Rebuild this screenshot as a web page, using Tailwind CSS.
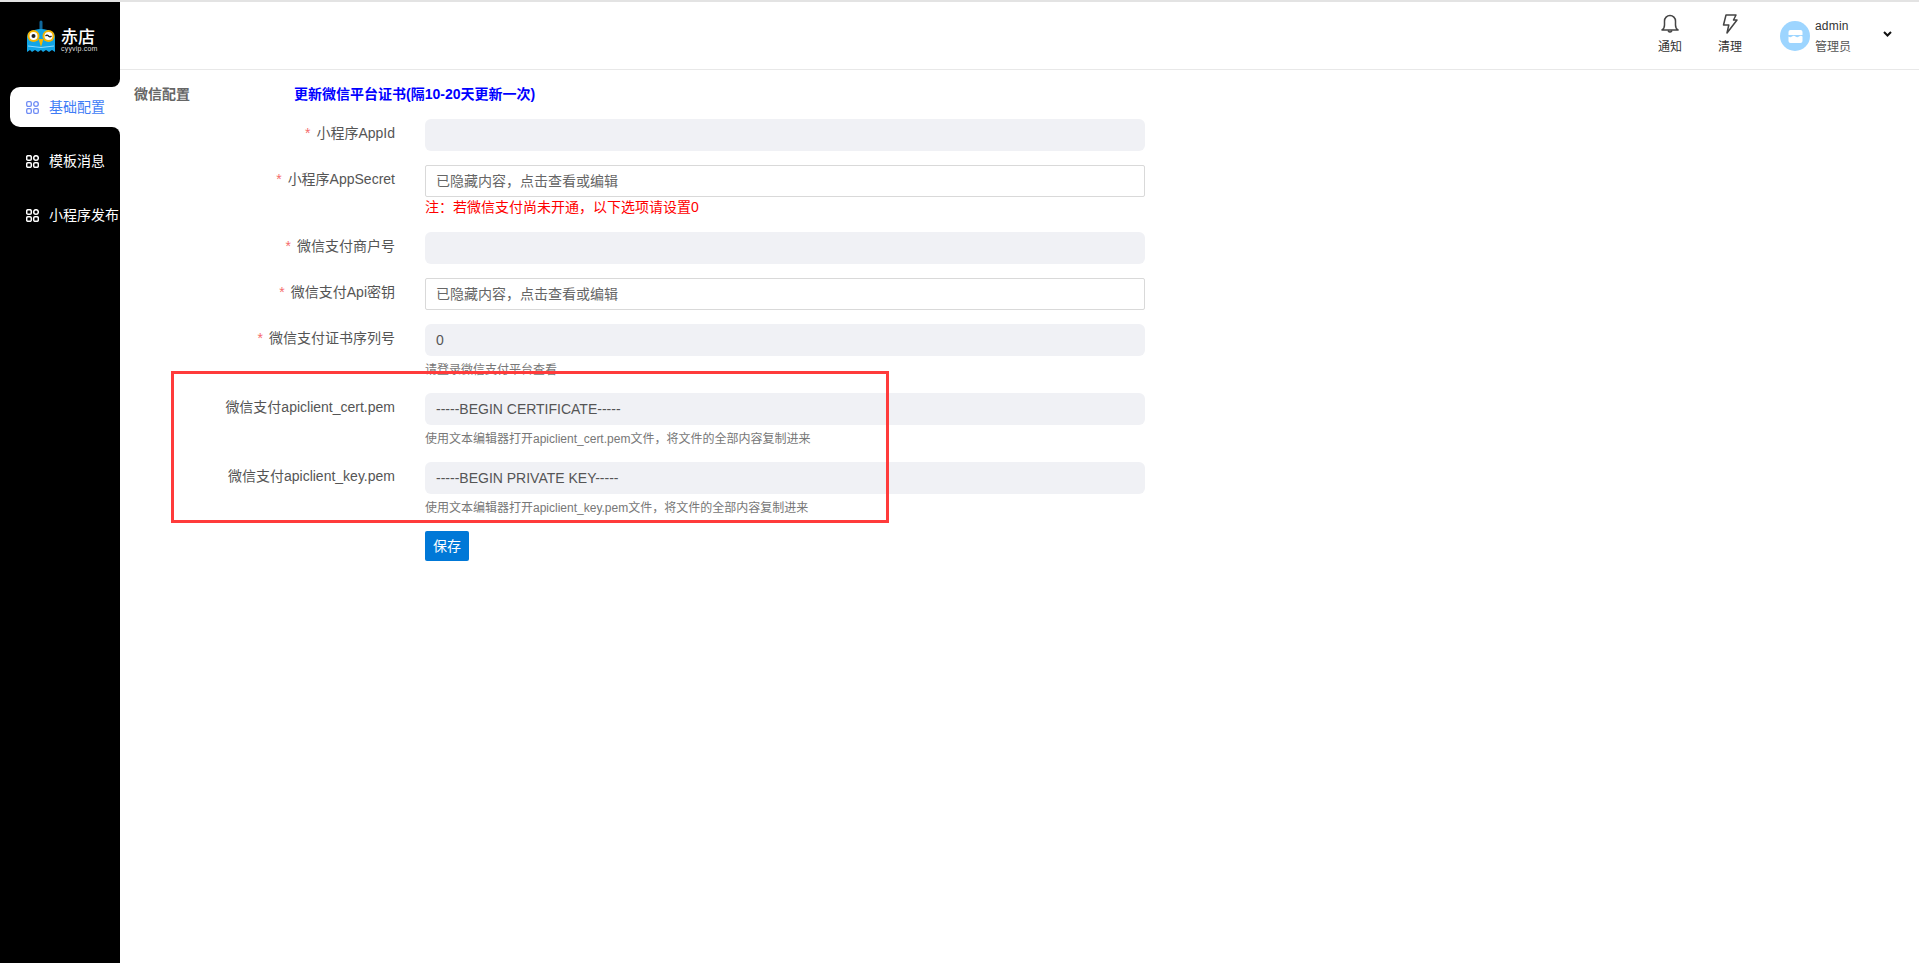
<!DOCTYPE html>
<html lang="zh">
<head>
  <meta charset="UTF-8" />
  <title>微信配置</title>
  <script src="https://cdn.jsdelivr.net/npm/@tailwindcss/browser@4"></script>
</head>
<body class="bg-white h-[963px] overflow-hidden font-['Liberation_Sans','Noto_Sans_CJK_SC',sans-serif] text-[14px] text-[#555]">
  <div class="h-[2px] bg-[#e3e3e3]"></div>
  <div class="flex h-[961px] relative">

    <!-- sidebar -->
    <aside class="w-[120px] shrink-0 bg-black text-white">
      <div class="h-[68px] pt-[18px] pl-[26px] flex gap-[5px]">
        <svg width="30" height="33" viewBox="0 0 30 33">
          <path d="M15 2v8" stroke="#10689c" stroke-width="3" stroke-linecap="round"/>
          <path d="M2 13q13-8 26 0l1 4v15l-3-2-3 2-3-2-3 2-2-2-3 2-3-2-3 2-2-2-3 2V17z" fill="#12a5e6"/>
          <path d="M2 26q13 3 26 0" stroke="#8fdcff" stroke-width="1" fill="none"/>
          <circle cx="7.500" cy="16" r="6" fill="#f7b500"/>
          <circle cx="7.500" cy="16" r="4" fill="#fff"/>
          <circle cx="7.500" cy="16" r="2" fill="#222"/>
          <circle cx="22.500" cy="16" r="6" fill="#f7b500"/>
          <circle cx="22.500" cy="16" r="4" fill="#fff"/>
          <path d="M19.500 16q1.500-1.800 3 0t3 0" stroke="#222" stroke-width="1.200" fill="none"/>
          <path d="M12.500 19h5l-2.500 8z" fill="#f7b500"/>
        </svg>
        <div class="pt-[9px] leading-none">
          <div class="text-[17px] h-[17px] leading-[17px] font-medium">赤店</div>
          <div class="text-[7px] leading-[8px] -mt-[1px] text-[#ddd] tracking-[0.2px]">cyyvip.com</div>
        </div>
      </div>
      <nav class="pt-[17px] flex flex-col gap-[14px]">
        <a class="relative ml-[10px] h-[40px] bg-white rounded-l-[10px] flex items-center pl-[16px] gap-[10px] text-[#3f7df6]">
          <span class="absolute right-0 -top-[10px] w-[10px] h-[10px] bg-white"><span class="block w-full h-full bg-black rounded-br-[8px]"></span></span>
          <span class="absolute right-0 -bottom-[10px] w-[10px] h-[10px] bg-white"><span class="block w-full h-full bg-black rounded-tr-[8px]"></span></span>
          <svg width="13" height="13" viewBox="0 0 13 13" fill="none" stroke="#6f8cf5" stroke-width="1.300"><rect x=".7" y=".7" width="4.600" height="4.600" rx="1.300"/><circle cx="10" cy="3" r="2.300"/><rect x=".7" y="7.700" width="4.600" height="4.600" rx="1.300"/><rect x="7.700" y="7.700" width="4.600" height="4.600" rx="1.300"/></svg>
          <span>基础配置</span>
        </a>
        <a class="ml-[10px] h-[40px] flex items-center pl-[16px] gap-[10px] whitespace-nowrap">
          <svg width="13" height="13" viewBox="0 0 13 13" fill="none" stroke="#fff" stroke-width="1.500"><rect x=".7" y=".7" width="4.600" height="4.600" rx="1.300"/><circle cx="10" cy="3" r="2.300"/><rect x=".7" y="7.700" width="4.600" height="4.600" rx="1.300"/><rect x="7.700" y="7.700" width="4.600" height="4.600" rx="1.300"/></svg>
          <span>模板消息</span>
        </a>
        <a class="ml-[10px] h-[40px] flex items-center pl-[16px] gap-[10px] whitespace-nowrap">
          <svg width="13" height="13" viewBox="0 0 13 13" fill="none" stroke="#fff" stroke-width="1.500"><rect x=".7" y=".7" width="4.600" height="4.600" rx="1.300"/><circle cx="10" cy="3" r="2.300"/><rect x=".7" y="7.700" width="4.600" height="4.600" rx="1.300"/><rect x="7.700" y="7.700" width="4.600" height="4.600" rx="1.300"/></svg>
          <span>小程序发布</span>
        </a>
      </nav>
    </aside>

    <div class="flex-1 min-w-0">
      <!-- header -->
      <header class="h-[67px] border-b border-[#e8e8e8] box-content flex justify-end text-[12px] text-[#333]">
        <div class="w-[24px] mr-[36px] pt-[12px] flex flex-col items-center">
          <svg width="18" height="20" viewBox="0 0 18 20" fill="none" stroke="#444" stroke-width="1.500" stroke-linejoin="round"><path d="M1 16q2.500-1.500 2.500-5V7a5.500 5.500 0 0 1 11 0v4q0 3.500 2.500 5z"/><path d="M7 16.500q2 3 4 0"/></svg>
          <span class="mt-[4px] leading-[18px]">通知</span>
        </div>
        <div class="w-[24px] mr-[38px] pt-[12px] flex flex-col items-center">
          <svg width="16" height="20" viewBox="0 0 16 20" fill="none" stroke="#444" stroke-width="1.500" stroke-linejoin="round"><path d="M4 1h10l-2.500 5H15L5 19l1.800-8H1.500z"/></svg>
          <span class="mt-[4px] leading-[18px]">清理</span>
        </div>
        <div class="flex pt-[19px]">
          <div class="w-[30px] h-[30px] rounded-full bg-[#9dd5ff] flex items-center justify-center">
            <svg width="15" height="13" viewBox="0 0 15 13"><path d="M2.500 0h10q2 0 2 2v3H.5V2q0-2 2-2z" fill="#fff"/><path d="M.5 6.500q1.750 1.500 3.500 0t3.500 0 3.500 0 3.500 0V11q0 2-2 2h-10q-2 0-2-2z" fill="#fff"/></svg>
          </div>
          <div class="ml-[5px] w-[68px]">
            <div class="leading-[18px] -mt-[4px] tracking-[0.2px]">admin</div>
            <div class="leading-[18px] mt-[3px] text-[#555]">管理员</div>
          </div>
          <svg class="mt-[10px] mr-[27px]" width="9" height="6" viewBox="0 0 9 6" fill="none" stroke="#111" stroke-width="2"><path d="M1 1l3.500 3.500L8 1"/></svg>
        </div>
      </header>

      <!-- form -->
      <main class="pl-[14px] pt-[14px] relative">
        <div class="flex h-[21px] leading-[21px]">
          <span class="w-[160px] font-bold text-[#666]">微信配置</span>
          <a class="font-bold text-[#0000ff]">更新微信平台证书(隔10-20天更新一次)</a>
        </div>
        <form class="mt-[14px] flex flex-col gap-[14px]">
          <div class="flex">
            <label class="w-[261px] text-right pt-[4px] leading-[21px]"><span class="text-[#f56c6c] mr-[6px]">*</span>小程序AppId</label>
            <div class="ml-[30px] w-[720px]"><div class="h-[32px] bg-[#f0f1f5] rounded-[6px]"></div></div>
          </div>
          <div class="flex">
            <label class="w-[261px] text-right pt-[4px] leading-[21px]"><span class="text-[#f56c6c] mr-[6px]">*</span>小程序AppSecret</label>
            <div class="ml-[30px] w-[720px]">
              <div class="h-[32px] border border-[#d9d9d9] rounded-[2px] px-[10px] leading-[30px] text-[#666]">已隐藏内容，点击查看或编辑</div>
              <p class="leading-[21px] text-[#ff0000]">注：若微信支付尚未开通，以下选项请设置0</p>
            </div>
          </div>
          <div class="flex">
            <label class="w-[261px] text-right pt-[4px] leading-[21px]"><span class="text-[#f56c6c] mr-[6px]">*</span>微信支付商户号</label>
            <div class="ml-[30px] w-[720px]"><div class="h-[32px] bg-[#f0f1f5] rounded-[6px]"></div></div>
          </div>
          <div class="flex">
            <label class="w-[261px] text-right pt-[4px] leading-[21px]"><span class="text-[#f56c6c] mr-[6px]">*</span>微信支付Api密钥</label>
            <div class="ml-[30px] w-[720px]">
              <div class="h-[32px] border border-[#d9d9d9] rounded-[2px] px-[10px] leading-[30px] text-[#666]">已隐藏内容，点击查看或编辑</div>
            </div>
          </div>
          <div class="flex">
            <label class="w-[261px] text-right pt-[4px] leading-[21px]"><span class="text-[#f56c6c] mr-[6px]">*</span>微信支付证书序列号</label>
            <div class="ml-[30px] w-[720px]">
              <div class="h-[32px] bg-[#f0f1f5] rounded-[6px] px-[11px] leading-[32px]">0</div>
              <p class="mt-[5px] text-[12px] leading-[18px] text-[#777]">请登录微信支付平台查看</p>
            </div>
          </div>
          <div class="flex">
            <label class="w-[261px] text-right pt-[4px] leading-[21px]">微信支付apiclient_cert.pem</label>
            <div class="ml-[30px] w-[720px]">
              <div class="h-[32px] bg-[#f0f1f5] rounded-[6px] px-[11px] leading-[32px]">-----BEGIN CERTIFICATE-----</div>
              <p class="mt-[5px] text-[12px] leading-[18px] text-[#777]">使用文本编辑器打开apiclient_cert.pem文件，将文件的全部内容复制进来</p>
            </div>
          </div>
          <div class="flex">
            <label class="w-[261px] text-right pt-[4px] leading-[21px]">微信支付apiclient_key.pem</label>
            <div class="ml-[30px] w-[720px]">
              <div class="h-[32px] bg-[#f0f1f5] rounded-[6px] px-[11px] leading-[32px]">-----BEGIN PRIVATE KEY-----</div>
              <p class="mt-[5px] text-[12px] leading-[18px] text-[#777]">使用文本编辑器打开apiclient_key.pem文件，将文件的全部内容复制进来</p>
            </div>
          </div>
          <div class="pl-[291px]">
            <button type="button" class="w-[44px] h-[30px] bg-[#0078d7] text-white rounded-[2px] text-[14px]">保存</button>
          </div>
        </form>
      </main>
    </div>

    <!-- 标注框 -->
    <div class="absolute left-[171px] top-[369px] w-[718px] h-[152px] border-[3px] border-[#ff3b3b]"></div>
  </div>
</body>
</html>
